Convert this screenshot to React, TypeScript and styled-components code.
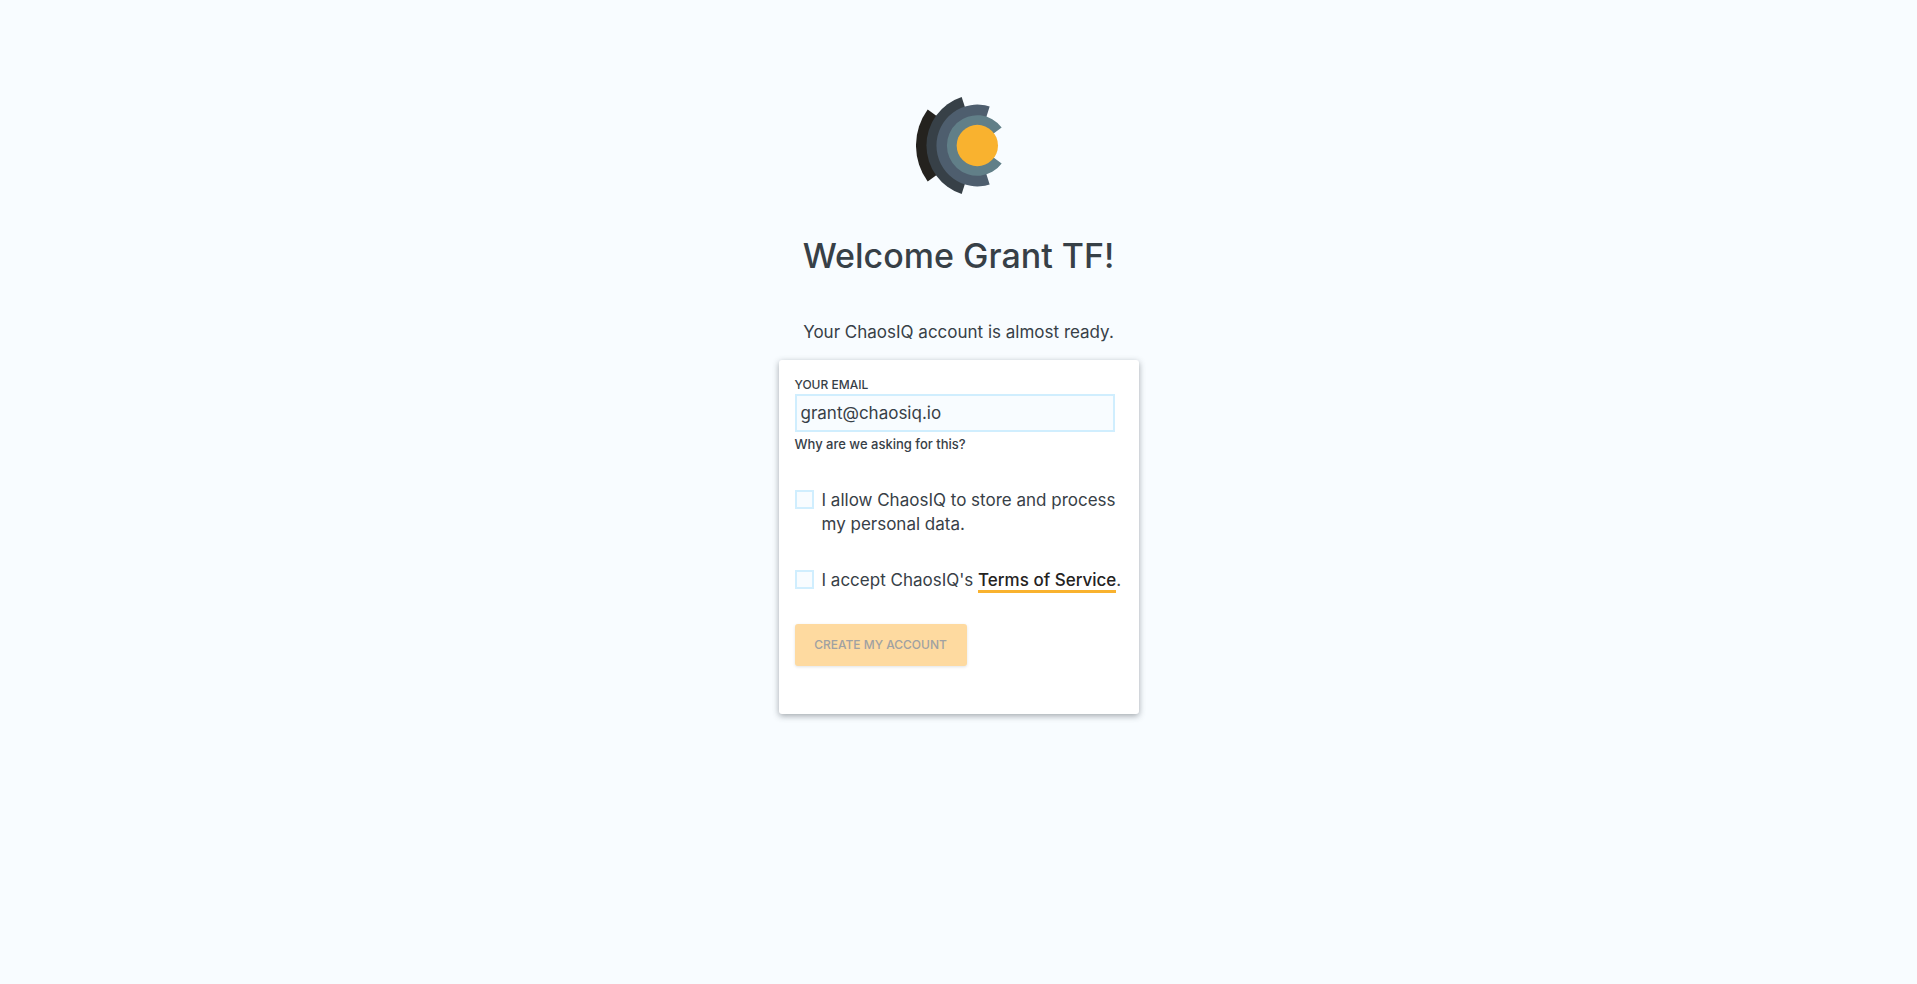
import React, { useState } from "react";
import styled, { createGlobalStyle } from "styled-components";

const GlobalStyle = createGlobalStyle`
  *, *::before, *::after { box-sizing: border-box; }
  body {
    margin: 0;
    background: #f8fcff;
    color: #374047;
    font-family: Inter, "Open Sans", sans-serif;
    font-size: 17px;
    line-height: 24px;
  }
`;

const Page = styled.main`
  display: flex;
  flex-direction: column;
  align-items: center;
  min-height: 100vh;
  padding: 97px 16px 48px;
`;

const Logo = styled.svg`
  display: block;
  width: 86px;
  height: 97px;
`;

const Title = styled.h1`
  margin: 38px 0 0;
  font-size: 34px;
  line-height: 48px;
  font-weight: 500;
  text-align: center;
`;

const Intro = styled.p`
  margin: 40px 0 16px;
  text-align: center;
`;

const Card = styled.form`
  width: 100%;
  max-width: 360px;
  padding: 16px 16px 48px;
  border-radius: 3px;
  background: #fff;
  box-shadow: 0 2px 6px rgba(55, 64, 71, 0.45);
`;

const Field = styled.div`
  display: flex;
  flex-direction: column;
  align-items: flex-start;
  padding-right: 8px;
`;

const Label = styled.label`
  font-size: 12px;
  line-height: 18px;
  font-weight: 500;
  text-transform: uppercase;
`;

const TextInput = styled.input`
  width: 100%;
  height: 38px;
  padding: 0 4px;
  border: 2px solid #d0eefe;
  border-radius: 0;
  background: #f8fcff;
  color: inherit;
  font: inherit;
  outline: none;
`;

const HelpButton = styled.button`
  padding: 0;
  border: 0;
  background: none;
  color: inherit;
  font: inherit;
  font-size: 13px;
  font-weight: 500;
  cursor: pointer;
`;

const Consent = styled.div`
  display: flex;
  align-items: flex-start;
  gap: 8px;
  margin-top: 32px;
`;

const Checkbox = styled.input`
  appearance: none;
  flex: none;
  width: 19px;
  height: 19px;
  margin: 2px 0 0;
  border: 2px solid #d0eefe;
  background: #f8fcff;

  &:checked { background: #f9b22f; }
`;

const TermsLink = styled.a`
  border-bottom: 3px solid #f9b22f;
  color: #24221e;
  font-weight: 500;
  text-decoration: none;
`;

const SubmitButton = styled.button`
  display: block;
  min-width: 172px;
  height: 42px;
  margin-top: 32px;
  padding: 0 18px;
  border: 0;
  border-radius: 3px;
  background: #f9b22f;
  box-shadow: 0 1px 3px rgba(55, 64, 71, 0.3);
  color: #24221e;
  font: inherit;
  font-size: 12px;
  font-weight: 500;
  text-transform: uppercase;

  &:disabled {
    background: #fedaa0;
    box-shadow: 0 1px 3px rgba(55, 64, 71, 0.15);
    color: #a0a1a2;
  }
`;

function ChaosLogo() {
  return (
    <Logo viewBox="48 51 258 291" role="img" aria-label="ChaosIQ">
      <path fill="#24221e" d="M232 196.500 L83 88.500 A184 184 0 0 0 83 304.500 Z" />
      <path fill="#374047" d="M232 196.500 L185 51 A153 153 0 0 0 185 342 Z" />
      <path fill="#4e5e6e" d="M232 196.500 L269 79.500 A122.700 122.700 0 1 0 269 313.500 Z" />
      <path fill="#617f88" d="M232 196.500 L305 142.500 A91 91 0 1 0 305 250.500 Z" />
      <circle fill="#f9b22f" cx="232" cy="196.500" r="62" />
    </Logo>
  );
}

export default function App() {
  const [email, setEmail] = useState("grant@chaosiq.io");
  const [privacy, setPrivacy] = useState(false);
  const [terms, setTerms] = useState(false);

  return (
    <>
      <GlobalStyle />
      <Page>
        <ChaosLogo />
        <Title>Welcome Grant TF!</Title>
        <Intro>Your ChaosIQ account is almost ready.</Intro>
        <Card onSubmit={(event) => event.preventDefault()}>
          <Field>
            <Label htmlFor="email">Your email</Label>
            <TextInput
              id="email"
              type="email"
              value={email}
              onChange={(event) => setEmail(event.target.value)}
            />
            <HelpButton type="button">Why are we asking for this?</HelpButton>
          </Field>
          <Consent>
            <Checkbox
              id="privacy"
              type="checkbox"
              checked={privacy}
              onChange={(event) => setPrivacy(event.target.checked)}
            />
            <label htmlFor="privacy">
              I allow ChaosIQ to store and process my personal data.
            </label>
          </Consent>
          <Consent>
            <Checkbox
              id="terms"
              type="checkbox"
              checked={terms}
              onChange={(event) => setTerms(event.target.checked)}
            />
            <label htmlFor="terms">
              I accept ChaosIQ's <TermsLink href="#terms-of-service">Terms of Service</TermsLink>.
            </label>
          </Consent>
          <SubmitButton type="submit" disabled={!privacy || !terms}>
            Create my account
          </SubmitButton>
        </Card>
      </Page>
    </>
  );
}
